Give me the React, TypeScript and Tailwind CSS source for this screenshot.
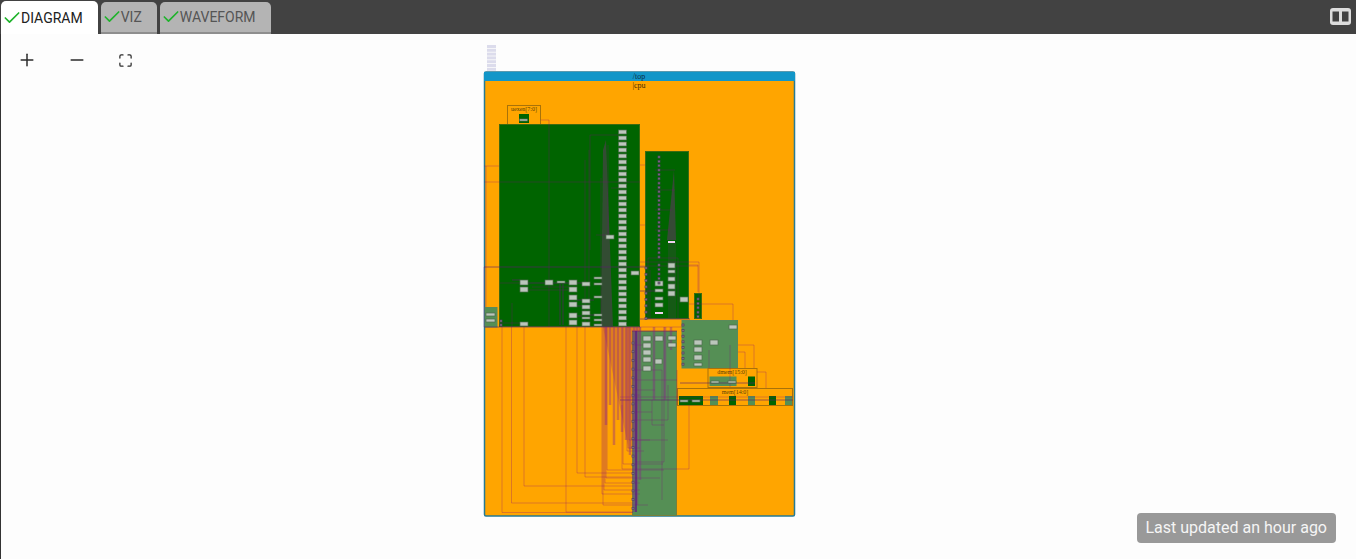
import { Check, Maximize, Minus, Plus } from 'lucide-react';

type Box = [number, number, number, number];

const DARK = '#006400';
const LIGHT = '#558f55';
const CHIP = '#bcc6bc';

const topChips: Box[] = Array.from({ length: 33 }, (_, i) => [618.5, 130 + i * 6, 8, 4]);

const chips: Box[] = [
  ...topChips,
  [520, 280, 8, 5], [520, 287, 8, 5], [520, 322, 8, 4], [545, 280, 8, 5], [557, 281, 8, 2],
  [569, 280, 8, 5], [569, 287, 8, 5], [569, 295, 8, 5], [569, 302, 8, 5], [569, 313, 8, 5], [569, 320, 8, 5],
  [582, 282, 8, 4], [582, 299, 8, 4], [582, 305, 8, 4], [582, 311, 8, 4], [582, 317, 8, 2], [582, 322, 8, 4],
  [594, 277, 8, 2], [594, 283, 8, 2], [594, 296, 8, 2], [594, 314, 8, 2], [594, 319, 8, 2], [594, 324, 8, 2],
  [606, 235, 8, 4], [631, 271, 8, 4],
  [668, 263, 7, 5], [668, 270, 7, 3], [668, 277, 7, 4], [668, 284, 7, 5], [668, 291, 7, 5],
  [655, 281, 8, 5], [655, 289, 8, 3], [655, 297, 8, 3], [655, 303, 8, 4],
  [680, 297, 8, 5],
  [643, 336, 8, 5], [643, 343, 8, 5], [643, 350, 8, 5], [643, 357, 8, 5], [643, 366, 8, 5],
  [655, 336, 8, 5], [655, 359, 7, 5], [668, 336, 8, 4], [668, 343, 8, 4],
  [694, 340, 8, 5], [694, 347, 8, 5], [694, 355, 8, 5], [694, 363, 8, 3], [710, 340, 8, 5], [729, 325, 8, 4],
  [711, 381, 8, 2], [728, 381, 8, 2], [680, 400, 8, 2], [692, 400, 8, 2],
  [486, 313, 9, 3], [486, 319, 9, 3], [519.5, 119, 8, 2],
];

const dots: Box[] = [
  ...Array.from({ length: 24 }, (_, i): Box => [658, 156 + i * 4.35, 2, 2]),
  ...Array.from({ length: 5 }, (_, i): Box => [658, 264 + i * 4.5, 2, 2]),
  ...Array.from({ length: 9 }, (_, i): Box => [645, 267 + i * 6.3, 2, 2]),
  ...Array.from({ length: 5 }, (_, i): Box => [697, 298 + i * 4.4, 2, 2]),
  ...Array.from({ length: 20 }, (_, i): Box => [632, 342 + i * 8.7, 2, 2]),
  ...Array.from({ length: 8 }, (_, i): Box => [682, 324 + i * 5.6, 2, 2]),
  [500, 320, 2, 2], [500, 324, 2, 2],
];

const wires: string[] = [
  'M502,327V512.5H633', 'M511.5,327V503H633', 'M524,327V486H633', 'M566,327V512H633', 'M577,327V473H633',
  'M585,327V477H633', 'M603,327V505H648', 'M602,327V494H640', 'M604,327V490H640', 'M605,327V483H640',
  'M606,327V478H660', 'M607,327V470H664', 'M623,327V464H663', 'M627,327V451H644', 'M628,327V448H640',
  'M629,327V440H650', 'M622,405V469H689V405', 'M636,400V462H664V327', 'M652,400V425H664', 'M636,412H652',
  'M484,166H499', 'M484,182H640', 'M484,267V327', 'M486,166V307', 'M541,120H549V327',
  'M512,327V303', 'M589,150V327', 'M601,178V327', 'M611,188H618', 'M640,225H645', 'M640,165H645',
  'M640,262H699V300', 'M640,266H698', 'M689,265H698V292', 'M689,304H733V320', 'M738,345H754V368', 'M738,352H745V368',
  'M757,372H766V388', 'M709,368V350', 'M730,387V345', 'M620,397H793', 'M677,405V370', 'M640,327H682',
  'M648,258H678V319', 'M648,258V319', 'M655,170H675', 'M655,190H675', 'M655,210H672', 'M655,230H670',
  'M650,270V319', 'M633,345H650', 'M633,370H662V500', 'M633,395H640', 'M633,420H668V385', 'M633,440H668',
  'M633,380H677', 'M633,390H655', 'M532,287H569', 'M500,283H520', 'M528,290H569', 'M500,323H520',
  'M590,135H618', 'M585,160V327', 'M590,135V250', 'M608,145V235', 'M596,235H606',
];

const strong: string[] = [
  'M484,267H645', 'M484,327H640', 'M640,291H655', 'M640,319H690', 'M632,331H677', 'M620,400H793', 'M680,383H755',
  'M512,280H520', 'M528,283H545', 'M553,283H569', 'M577,283H582', 'M577,300H582', 'M577,306H582', 'M577,316H582',
  'M590,300H594', 'M590,315H594', 'M560,284V325', 'M563,284V325',
];

const bundles: string[] = [
  'M606,327V425', 'M610,327V405', 'M614,327V445', 'M618,327V420', 'M622,327V432', 'M626,327V440', 'M630,327V455',
  'M634,327V512', 'M637,327V505', 'M640,327V480', 'M654,327V400', 'M665,327V400', 'M671,327V350',
];

function Tab({ label, active }: { label: string; active?: boolean }) {
  return (
    <div
      className={
        active
          ? 'flex h-[33px] items-center rounded-t-[5px] bg-white pl-px pr-[15px] text-[#212121]'
          : 'flex h-[32px] items-center rounded-t-[5px] border-b-2 border-[#8e8e8e] bg-[#b4b4b4] pl-px pr-[15px] text-[#555555]'
      }
    >
      <Check size={20} strokeWidth={2} className="-mr-px text-[#1fb32b]" />
      <span>{label}</span>
    </div>
  );
}

function Chips({ items, fill, edge }: { items: Box[]; fill: string; edge: string }) {
  return (
    <>
      {items.map(([x, y, w, h], i) => (
        <rect key={i} x={x} y={y} width={w} height={h} fill={fill} stroke={edge} strokeWidth={0.7} />
      ))}
    </>
  );
}

function Diagram() {
  return (
    <svg width={313} height={474} viewBox="483 44 313 474" className="block">
      {[0, 1, 2, 3, 4, 5, 6].map((i) => (
        <rect key={i} x={487} y={45 + i * 3.8} width={9} height={3} fill="#dcdcec" />
      ))}

      <rect x={484.5} y={72} width={310} height={444} rx={1.5} fill="#ffa500" stroke="#267a94" strokeWidth={1.5} />
      <rect x={484} y={72} width={311} height={9} fill="#1296c8" />
      <text x={639} y={78.5} textAnchor="middle" fontSize={8} fontFamily="Liberation Serif, serif" fill="#0b2c40">/top</text>
      <text x={639} y={87.5} textAnchor="middle" fontSize={8} fontFamily="Liberation Serif, serif" fill="#3f2c00">|cpu</text>

      <rect x={507.5} y={105.5} width={33} height={19} fill="none" stroke="#a8720a" />
      <text x={524} y={111} textAnchor="middle" fontSize={6} fontFamily="Liberation Serif, serif" fill="#5e4308">uexen[7:0]</text>
      <rect x={519} y={114} width={10} height={9} fill={DARK} />

      <rect x={499.5} y={124.5} width={140} height={202} fill={DARK} stroke="#3f6a10" />
      <rect x={645.5} y={151.5} width={43} height={167} fill={DARK} stroke="#3f6a10" />
      <rect x={694.5} y={293.5} width={7} height={25} fill={DARK} stroke="#3f6a10" />
      <rect x={632.5} y={331.5} width={44} height={184} fill={LIGHT} stroke="#77803a" />
      <rect x={682} y={320.5} width={55.5} height={47.5} fill={LIGHT} stroke="#5a8a5a" />
      <rect x={485} y={307.5} width={12} height={19.5} fill={LIGHT} stroke="#5a8a5a" />

      <rect x={708} y={368.5} width={49} height={19} fill="none" stroke="#a8720a" />
      <text x={732} y={373.5} textAnchor="middle" fontSize={6} fontFamily="Liberation Serif, serif" fill="#5e4308">dmem[15:0]</text>
      <rect x={709.5} y={376.5} width={27} height={9.5} fill={LIGHT} />
      <rect x={748} y={376.5} width={7} height={9.5} fill={DARK} />

      <rect x={677.5} y={388.5} width={115} height={17} fill="none" stroke="#a8720a" />
      <text x={735} y={393.5} textAnchor="middle" fontSize={6} fontFamily="Liberation Serif, serif" fill="#5e4308">mem[14:0]</text>
      <rect x={679} y={396} width={24} height={9} fill={DARK} />
      <rect x={710} y={396} width={8} height={9} fill={LIGHT} />
      <rect x={729} y={396} width={7} height={9} fill={DARK} />
      <rect x={748} y={396} width={7} height={9} fill={LIGHT} />
      <rect x={769} y={396} width={7} height={9} fill={DARK} />
      <rect x={785} y={396} width={7} height={9} fill={LIGHT} />

      <polygon points="603,150 606,140 613,327 601,327" fill="#444444" opacity={0.75} />
      <polygon points="674,170 667,240 676,240" fill="#444444" opacity={0.8} />
      <rect x={668} y={242} width={8} height={76} fill="#444444" opacity={0.3} />
      <polygon points="603,327 641,327 637,445 629,450" fill="#8b1f5b" opacity={0.22} />

      {wires.map((d, i) => (
        <path key={i} d={d} fill="none" stroke="#800080" strokeOpacity={0.28} strokeWidth={1} />
      ))}
      {strong.map((d, i) => (
        <path key={i} d={d} fill="none" stroke="#5e1a70" strokeOpacity={0.6} strokeWidth={1} />
      ))}
      {bundles.map((d, i) => (
        <path key={i} d={d} fill="none" stroke="#8b1f8b" strokeOpacity={0.38} strokeWidth={2.5} />
      ))}
      <path d="M636,331V512" fill="none" stroke="#5e1a80" strokeOpacity={0.7} strokeWidth={2} />

      <Chips items={chips} fill={CHIP} edge="#4f6a4f" />
      <Chips items={dots} fill="#8f7f8f" edge="#4f3f5f" />
      <rect x={668} y={241} width={7} height={2} fill="#f0d0f0" />
      <rect x={655} y={312} width={8} height={2} fill="#f0d0f0" />
    </svg>
  );
}

export default function App() {
  return (
    <div className="relative h-[559px] w-[1356px] overflow-hidden bg-[#fdfdfd] font-['Roboto',sans-serif]">
      <div className="flex h-[34px] items-end gap-[3px] bg-[#424242] pl-px text-sm">
        <Tab label="DIAGRAM" active />
        <Tab label="VIZ" />
        <Tab label="WAVEFORM" />
        <button className="mb-[9px] ml-auto mr-[5px] block">
          <svg width={21} height={17} viewBox="0 0 21 17" className="block">
            <rect width={21} height={17} rx={3} fill="#dddddd" />
            <rect x={2.5} y={3.5} width={6.5} height={10} fill="#424242" />
            <rect x={12} y={3.5} width={6.5} height={10} fill="#424242" />
          </svg>
        </button>
      </div>

      <div className="flex h-[525px] border-l border-[#333333]">
        <div className="flex h-[52px] w-[483px] shrink-0 items-center text-[#2b2b2b]">
          <button className="ml-[16px]"><Plus size={20} strokeWidth={1.8} /></button>
          <button className="ml-[30px]"><Minus size={20} strokeWidth={1.8} /></button>
          <button className="ml-[31px]"><Maximize size={15} strokeWidth={2} /></button>
        </div>
        <div className="-ml-px pt-[10px]">
          <Diagram />
        </div>
      </div>

      <div className="absolute bottom-4 right-5 rounded bg-[#999999] px-[9px] py-[4px] text-base leading-[22px] text-[#f5f5f5]">
        Last updated an hour ago
      </div>
    </div>
  );
}
